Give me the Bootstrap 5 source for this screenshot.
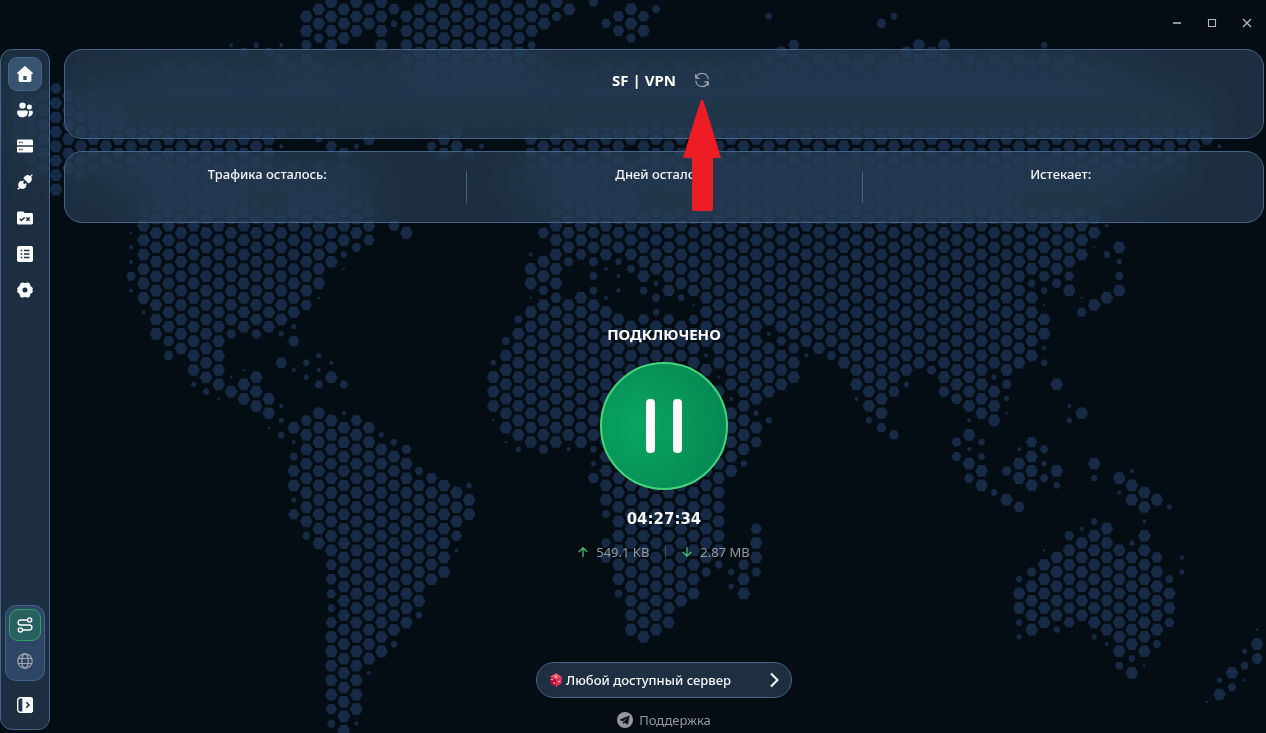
<!DOCTYPE html>
<html lang="ru" data-bs-theme="dark">
<head>
<meta charset="utf-8">
<meta name="viewport" content="width=device-width, initial-scale=1">
<title>SF | VPN</title>
<link href="https://cdn.jsdelivr.net/npm/bootstrap@5.3.0/dist/css/bootstrap.min.css" rel="stylesheet">
<style>
  :root { --edge: #43658a; --glass: rgba(51, 80, 107, .5); }
  body { background: #050d14; color: #f4f6f8; font-family: "Noto Sans", "Open Sans", sans-serif; font-size: 13px; line-height: 20px; }
  .world { position: fixed; inset: 0; width: 100%; height: 100%; z-index: -1; }
  .world path { fill: #182b46; }
  .glass { background: var(--glass); border: 1px solid var(--edge); backdrop-filter: blur(20px); }
  .ghost { background: none; border: 0; padding: 0; color: inherit; display: flex; align-items: center; justify-content: center; }
  .titlebar { height: 49px; padding-right: 2px; }
  .titlebar .ghost { width: 35px; height: 45px; color: #b4b8bc; }
  .rail { width: 50px; border-radius: 12px; padding: 7px 4px; margin-bottom: 3px; }
  .rail .ghost { width: 34px; height: 34px; border-radius: 9px; border: 1px solid transparent; color: #fafbfc; }
  .rail .ghost.on { background: #38536e; border-color: #44668a; }
  .rail .modes { background: #2f4766; border: 1px solid var(--edge); border-radius: 11px; width: 40px; padding: 3px; gap: 4px; }
  .rail .modes .ghost { width: 32px; height: 32px; color: #a3a7ad; }
  .rail .modes .ghost.on { background: #28605f; border-color: #2fa36c; color: #fff; }
  .main { padding: 0 2px 0 14px; gap: 12px; }
  .pane { border-radius: 18px; }
  .head { z-index: 2; padding: 16px 62px 10px; gap: 5px; }
  .heading { font-size: 15px; font-weight: 700; line-height: 24px; margin: 0; }
  .refresh { width: 28px; height: 28px; color: #a8acb0; }
  .pointer { position: absolute; left: 50%; top: 34px; transform: translateX(-50%); pointer-events: none; }
  .veil { background: rgba(32, 54, 72, .65); }
  .veil.wide { height: 29px; }
  .veil.small { height: 21px; margin-top: 5px; }
  .stats { padding: 12px 4px; }
  .stat { position: relative; font-weight: 500; }
  .stat + .stat::before { content: ""; position: absolute; left: 0; top: 7px; height: 32px; border-left: 1px solid var(--edge); }
  .power { width: 128px; height: 128px; border-radius: 50%; border: 2px solid #43d67b; background: radial-gradient(circle at 30% 50%, #08a660, #068250); margin: 16px 0 17px; }
  .clock { font-family: "DejaVu Sans", sans-serif; font-size: 15px; font-weight: 700; line-height: 24px; }
  .session { margin: -14px 0 0; }
  .traffic { color: #96999d; margin-top: 11px; gap: 16px; }
  .traffic svg { color: #3ecf77; }
  .traffic .split { height: 12px; border-left: 1px solid #3f4e60; }
  .server { width: 256px; height: 36px; border-radius: 18px; background: #1f2f42; border: 1px solid var(--edge); color: #f4f6f8; font-weight: 500; padding: 0 10px 0 13px; }
  .support { color: #95979b; text-decoration: none; gap: 6px; margin: 12px 0 3px; }
</style>
</head>
<body class="vh-100 d-flex flex-column overflow-hidden">
<svg class="world" viewBox="0 0 1266 733" preserveAspectRatio="xMidYMid slice" aria-hidden="true"><path id="land"/></svg>

<header class="titlebar d-flex justify-content-end flex-shrink-0">
  <button class="ghost" aria-label="Свернуть"><svg width="10" height="10" viewBox="0 0 10 10"><path d="M1 5h8" stroke="currentColor" stroke-width="1.6"/></svg></button>
  <button class="ghost" aria-label="Развернуть"><svg width="10" height="10" viewBox="0 0 10 10"><path d="M1.5 1.5h7v7h-7z" fill="none" stroke="currentColor" stroke-width="1.1"/></svg></button>
  <button class="ghost" aria-label="Закрыть"><svg width="10" height="10" viewBox="0 0 10 10"><path d="m1 1 8 8M9 1 1 9" stroke="currentColor" stroke-width="1.3"/></svg></button>
</header>

<div class="d-flex flex-grow-1">
  <nav class="rail glass d-flex flex-column align-items-center flex-shrink-0" aria-label="Меню">
    <div class="d-flex flex-column" style="gap:2px">
      <button class="ghost on" aria-label="Главная"><svg width="16" height="16" viewBox="0 0 16 16" fill="currentColor" fill-rule="evenodd"><path d="M7.3.4a1 1 0 0 1 1.4 0l7 6.3c.5.5.2 1.2-.4 1.2h-.9v6.6c0 .8-.6 1.4-1.4 1.4H3a1.400 1.400 0 0 1-1.400-1.400V7.900H.7c-.6 0-.9-.7-.4-1.200zM6.300 10.500v3.500h3.400v-3.500a.6.6 0 0 0-.6-.6H6.900a.6.6 0 0 0-.6.6z"/></svg></button>
      <button class="ghost" aria-label="Профили"><svg width="16" height="16" viewBox="0 0 16 16" fill="currentColor"><circle cx="5.500" cy="3.600" r="3.200"/><circle cx="12.400" cy="5" r="2.500"/><path d="M1.600 8.400h7.800c.8 0 1.400.6 1.400 1.400 0 3.200-1.800 5.500-5.300 5.500S.1 13 .1 9.900c0-.8.7-1.500 1.500-1.500zM11.400 8.700h3.100c.8 0 1.400.6 1.400 1.400 0 2.300-1.400 4.300-3.700 4.300-.5 0-.9-.1-1.300-.2.8-1.200 1.200-2.500 1.200-4 0-.5-.3-1.100-.7-1.500z"/></svg></button>
      <button class="ghost" aria-label="Серверы"><svg width="16" height="16" viewBox="0 0 16 16" fill="currentColor" fill-rule="evenodd"><path d="M1.300 1.500h13.400c.7 0 1.300.6 1.300 1.300v4.400H0V2.800c0-.7.600-1.300 1.300-1.300zM2 3.800v1.500h1.300V3.800zM4.400 3.800v1.500h1.300V3.800zM0 8.800h16v4.400c0 .7-.6 1.300-1.300 1.300H1.300C.6 14.500 0 13.900 0 13.200zM2 10.800v1.500h1.300v-1.500zM4.400 10.800v1.500h1.300v-1.500z"/></svg></button>
      <button class="ghost" aria-label="Подключения"><svg width="16" height="16" viewBox="0 0 16 16" fill="currentColor"><path d="m14.900.2.9.9-1.700 1.700c1.200 1.800.9 3.700-.5 5.100l-1.200 1.200-.9.300-5-5 .3-.9L8 2.300C9.400.9 11.500.7 13.200 1.900zM2.300 8 3.700 6.600l1 1 1.200-1.200 1.200 1.200-1.200 1.200 1.500 1.500 1.200-1.200 1.200 1.200-1.200 1.200.9 1-1.300 1.300c-1.500 1.500-3.500 1.600-5.100.4L1.100 15.800l-.9-.9L1.900 13.200C.7 11.500.9 9.400 2.300 8z"/></svg></button>
      <button class="ghost" aria-label="Правила"><svg width="16" height="16" viewBox="0 0 16 16"><path fill="currentColor" d="M1.500 1.500h4.600l1.700 1.600h6.700c.8 0 1.500.7 1.500 1.500v8.400c0 .8-.7 1.500-1.500 1.500h-13C.7 14.500 0 13.800 0 13V3c0-.8.700-1.500 1.500-1.500z"/><path d="m2.800 8.800 1.700 1.700 3.200-3.300m1.700.2 3.200 3.300m0-3.300-3.200 3.300" fill="none" stroke="#20334a" stroke-width="1.500"/></svg></button>
      <button class="ghost" aria-label="Журнал"><svg width="16" height="16" viewBox="0 0 16 16"><rect width="16" height="16" rx="1.800" fill="currentColor"/><path d="M3.700 4.500h1.500M3.700 8h1.500M3.700 11.500h1.500M7 4.500h5.500M7 8h5.500M7 11.500h5.500" stroke="#20334a" stroke-width="1.500"/></svg></button>
      <button class="ghost" aria-label="Настройки"><svg width="16" height="16" viewBox="0 0 16 16" fill="currentColor" fill-rule="evenodd"><path d="M5.500.4c1 0 1.500.7 2.500.7s1.500-.7 2.500-.7c1.300 0 2.700 1 2.700 2.400 0 1 .4 1.500 1.200 2 .9.500 1.500 1.300 1.500 2.200 0 .4-.7.600-.7 1s.7.600.7 1c0 .9-.5 1.700-1.500 2.200-.8.500-1.200 1-1.200 2 0 1.400-1.300 2.400-2.700 2.400-1 0-1.500-.7-2.500-.7s-1.500.7-2.500.7c-1.400 0-2.700-1-2.700-2.400 0-1-.4-1.500-1.200-2C.6 10.700.1 9.900.1 9c0-.4.7-.6.7-1S.1 7.400.1 7c0-.9.600-1.700 1.500-2.200.8-.5 1.200-1 1.200-2C2.800 1.400 4.200.4 5.500.4zM8 5.500a2.500 2.500 0 1 0 0 5 2.500 2.500 0 0 0 0-5z"/></svg></button>
    </div>
    <div class="modes d-flex flex-column align-items-center mt-auto">
      <button class="ghost on" aria-label="Туннель"><svg width="16" height="16" viewBox="0 0 16 16" fill="none" stroke="currentColor" stroke-width="1.400"><circle cx="12.600" cy="3" r="2.100"/><circle cx="3.400" cy="13" r="2.100"/><path d="M10.500 3H3.600a2.500 2.500 0 0 0 0 5h8.800a2.500 2.500 0 0 1 0 5H5.500"/></svg></button>
      <button class="ghost" aria-label="Системный прокси"><svg width="16" height="16" viewBox="0 0 16 16" fill="none" stroke="currentColor" stroke-width="1.200"><circle cx="8" cy="8" r="7.200"/><ellipse cx="8" cy="8" rx="3.300" ry="7.200"/><path d="M1.300 5.500h13.400M1.300 10.500h13.400"/></svg></button>
    </div>
    <button class="ghost" aria-label="Развернуть меню" style="margin-top:7px"><svg width="16" height="16" viewBox="0 0 16 16"><rect x=".7" y=".7" width="14.600" height="14.600" rx="2.500" fill="#20334a" stroke="currentColor" stroke-width="1.400"/><path d="M5.300 0H13a3 3 0 0 1 3 3v10a3 3 0 0 1-3 3H5.300z" fill="currentColor"/><path d="m9.300 5.300 2.700 2.700-2.700 2.700" fill="none" stroke="#20334a" stroke-width="1.600"/></svg></button>
  </nav>

  <main class="main d-flex flex-column flex-grow-1">
    <section class="pane head glass position-relative d-flex flex-column">
      <div class="d-flex justify-content-center align-items-center" style="gap:12px">
        <h1 class="heading">SF | VPN</h1>
        <div class="position-relative">
          <button class="ghost refresh" aria-label="Обновить"><svg width="14" height="14" viewBox="0 0 14 14" fill="none" stroke="currentColor" stroke-width="1.100"><path d="M.7 1.200v3.900h3.900M.9 5A6.300 6.300 0 0 1 13.200 6.200M13.300 12.800V8.900H9.400M13.100 9A6.300 6.300 0 0 1 .8 7.800"/></svg></button>
          <svg class="pointer" width="38" height="111" viewBox="0 0 38 111" aria-hidden="true"><path d="M18 0h2l4 12 14 46H30v51q0 2-2 2H10q-1 0-1-2V58H0L14 12z" fill="#ee1c25"/></svg>
        </div>
      </div>
      <div class="veil wide"></div>
    </section>

    <section class="pane stats glass d-flex text-center">
      <div class="stat col d-flex flex-column align-items-center">Трафика осталось:<span class="veil small" style="width:40px"></span></div>
      <div class="stat col d-flex flex-column align-items-center">Дней осталось:<span class="veil small" style="width:46px"></span></div>
      <div class="stat col d-flex flex-column align-items-center">Истекает:<span class="veil small" style="width:82px"></span></div>
    </section>

    <section class="session flex-grow-1 d-flex flex-column align-items-center justify-content-center">
      <h2 class="heading">ПОДКЛЮЧЕНО</h2>
      <button class="ghost power" aria-label="Отключить"><svg width="36" height="54" viewBox="0 0 36 54" fill="#fafafa"><rect width="9" height="54" rx="4"/><rect x="27" width="9" height="54" rx="4"/></svg></button>
      <time class="clock">04:27:34</time>
      <div class="traffic d-flex align-items-center">
        <span class="d-flex align-items-center gap-2"><svg width="10" height="10" viewBox="0 0 10 10" fill="none" stroke="currentColor" stroke-width="1.200"><path d="M5 10V.8M.8 5 5 .8 9.200 5"/></svg>549.1 KB</span>
        <span class="split"></span>
        <span class="d-flex align-items-center gap-2"><svg width="10" height="10" viewBox="0 0 10 10" fill="none" stroke="currentColor" stroke-width="1.200"><path d="M5 0v9.200M.8 5 5 9.200 9.200 5"/></svg>2.87 MB</span>
      </div>
    </section>

    <footer class="d-flex flex-column align-items-center" style="margin-top:-12px">
      <button class="server d-flex align-items-center">
        <svg width="12" height="14" viewBox="0 0 12 14" class="me-1"><path d="M6 .3 11.800 3.500 6 7 .2 3.500z" fill="#f4516b"/><path d="M.2 3.500 6 7v6.800L.2 10.300z" fill="#b90d33"/><path d="M11.800 3.500 6 7v6.800l5.800-3.500z" fill="#e5304e"/><circle cx="6" cy="3.500" r=".9" fill="#fff"/><circle cx="2" cy="6.500" r=".8" fill="#fff"/><circle cx="4.200" cy="10.300" r=".8" fill="#fff"/><circle cx="9" cy="8.500" r=".8" fill="#fff"/></svg>
        Любой доступный сервер
        <svg width="14" height="16" viewBox="0 0 14 16" class="ms-auto" fill="none" stroke="#fff" stroke-width="2"><path d="m4 1.500 6.500 6.500L4 14.500"/></svg>
      </button>
      <a href="#" class="support d-flex align-items-center">
        <svg width="16" height="16" viewBox="0 0 16 16"><circle cx="8" cy="8" r="8" fill="currentColor"/><path d="M12.600 4.200 11 12c-.1.500-.5.600-.9.400L7.700 10.600l-1.200 1.200c-.2.200-.5.100-.5-.2l-.2-2.300L3 8.300c-.5-.2-.5-.6.1-.9l8.700-3.600c.5-.2.900 0 .8.400zM6.200 9.100l.3 1.500.4-1.100 4-3.900z" fill="#09121a"/></svg>
        Поддержка
      </a>
    </footer>
  </main>
</div>

<script src="https://cdn.jsdelivr.net/npm/bootstrap@5.3.0/dist/js/bootstrap.bundle.min.js"></script>
<script>
// Each entry is "column: cells". A cell is a row, a run of full rows (a~b) or row.size (size 1 to 9).
const west = `-9:-9~-6;-8:-10~-4;-7:-9~-4;-6:-10.8 -9~-3;-5:-9~-4;-4:-9~-4;-3:-10~-4;-2:-10~-4;-1:-9~-3;
0:-10~-3 0.2 1.3 2.3 3.7 4.3;1:-10~5 6.3;2:-11~7;3:-11~7 8.8 9.7;4:-11~8;5:-11~10 11.4;6:-11~10 11.5;7:-11~11 12.2;
8:-13.3 -11~6 7.7 10.2 11;9:-12.7 -10~7 10.2 11 12;10:-13.4 -11~6 7.7 10 11 12;11:-12.7 -10~7 12 13 14.2;12:-13.3 -12~-7 -6.3 -4~6 7.4 9.8 12.3 13.4 14.5;
13:-11~-7 -4~6 7.4 8.8 10.3 14 15.3 16.6 17 18 19.4 20.8;14:-15~-14 -13.8 -12~-7 -4~4 5.8 9.5 10.4 13.8 14~20 21.6;
15:-15~-14 -13.7 -11~-7 -6.5 -4~4 5.2 9.4 10.3 11.6 13~22;16:-16~-13 -11~-7 -6.8 -4~2 9.3 10.9 13~22 23.8 24.8 25.7 26.6 27.8 28~32 33.8 34.6;
17:-15~-13 -11~-8 -5~1 2.5 3.2 11.6 13.3 14~35;18:-16~-14 -11~-8 -6.4 -4~0 1.7 13.8 14~33 34.3;19:-15~-14 -11~-6 -3~0 1.8 14~30 31.3;
20:-16~-13 -10~-8 14.4 15~29;21:-15.8 -14.5 -11~-8 0.8 15.5 16~28 29.5;22:-15~-13 -12~-8 0 15.7 16~27;23:-15~-8 17.6 18~26 27.5;
24:-16~-8 -6.7 17.8 18~24;25:-15~-5 18~24;26:-16~-7 -6.9 18~20 21.8 22.3;27:-15~-8 -5.8 18.4 19 20;28:-16~-8 -6.4;29:-15~-8;30:-16~-8;31:-15~-8;32:-16~-14 -13.6 -12~-8;33:-15~-14 -11~-8;34:-16 -15.7 -11~-8;35:-15.9 -10~-8`;
const east = `0:9.4 10 11 12 13.2;1:8.6 9~14 15.2;2:-4~-3 6.6 7~14 15.4;3:-6~-3 2.3 3 4 5.2 6~15;4:-6~-2 0.8 2 3 4.7 5~14 15.7;
5:-6~4 5.8 6~15;6:-9~1 2.7 5~14 15.3;7:-10~1 2.8 5~15;8:-16.7 -11~1 2.7 3.6 4.6 5~14 15.5 16.4 17.8;9:-14.7 -11~2 3.3 5.3 6~19 20.6 22.7 23.8;
10:-15.8 -14.8 -11~1 2.5 3.3 4.3 6~24 25.6;11:-15 -14 -13.7 -11~-6 -4~2 3.6 7~28;12:-15.8 -14 -11~3 4.6 6.8 7~28;13:-15.6 -11~3 4.4 5.6 6.5 7~28;14:-11~4 6.8 7~27;
15:-11~4 5.5 7~26;16:-11~4 5.2 6.7 7~25;17:-11~8 9.3 10~23 24.7;18:-11~9 10.2 11~22 23.6;19:-11~11 12.3 13~17 24.5 25.4;20:-11~15 16.5 23.8 24 25;
21:-11~12 13.4 14 15.8 21.8 22~23 24.7;22:-15.5 -12~6 7.3 8~11 13.5;23:-12~7 8.7 9~11;24:-13.8 -12~7 8.8 9 10;25:-11~8 9.3;26:-12~8;27:-11~8 9.7;28:-12~9;
29:-11~11 12.3;30:-12~12 13.5;31:-14.7 -11~13 14.7;32:-15.5 -12~10 11.8 14.7;33:-12~10 11.4;34:-13~9;35:-12~9 10.7;36:-13~10 11.8;37:-11~11 12.8 15.7 16.7;
38:-12~12 13.3 14 15.3 16 17.7;39:-11~13 15.5 16.5 17 18;40:-12~9 10.4 11 12 13 18.5;41:-11~10 11.7 12.4 13.2 17.7 19;42:-12~9 15.3 16 17 19.8 24.5 25 26 27.5 28.4;
43:-11~3 4.6 5~9 15.8 16 17 18 24.7 25~28;44:-13.5 -12~2 3.8 4.5 5.2 6 7 8.3 9.5 15.6 16.4 17.6 22.2 23~27;45:-11~3 4.7 11 17 18.5 23~27 28.5;
46:-12~2 3.7 4 12.3 13.4 21.7 22~26 27.8;47:-11~1 2 5.2 6.7 13 21.3 22~27;48:-11~0 1.2 5 16 17.5 20.5 21~27 28.4;49:-11~-2 0.3 2.5 5 21~28 29.3;
50:-11~-2 1.9 2.4 3.6 4 17 18.3 22~29 30.6;51:-10~-3 17.3 18 19 22.4 23~29 30.5 31;52:-10~-3 18 19 20.3 21~29 30.2;53:-9~-4 19 23.8 24~28 29.6;
54:-9~-4 19.4 24.6 25 26 27.7;55:-9~-4 23.3 24.4;56:-8~-6;57:-8~-6 33.2;58:-6.3 31.4 32;59:31 32.6;60:29.4 30.6 31.2;61:28.2 29 30.8`;
function cells(data, x0, odd, even) {
  let d = "";
  for (const entry of data.split(";")) {
    const [col, list] = entry.trim().split(":");
    for (const cell of list.trim().split(/\s+/)) {
      const [span, size = 9] = cell.split(".");
      const [a, b = a] = span.split("~").map(Number);
      const r = 0.71 * size, h = r * 0.91;
      for (let n = a; n <= b; n++) {
        const x = x0 + 12.52 * col, y = (col % 2 ? odd : even) + 14.43 * n;
        d += `M${x - r} ${y}l${r / 2} ${-h}h${r}l${r / 2} ${h}l${-r / 2} ${h}h${-r}z`;
      }
    }
  }
  return d;
}
document.getElementById("land").setAttribute("d", cells(west, 131, 225.7, 232.9) + cells(east, 493.3, 225.6, 232.8));
</script>
</body>
</html>
